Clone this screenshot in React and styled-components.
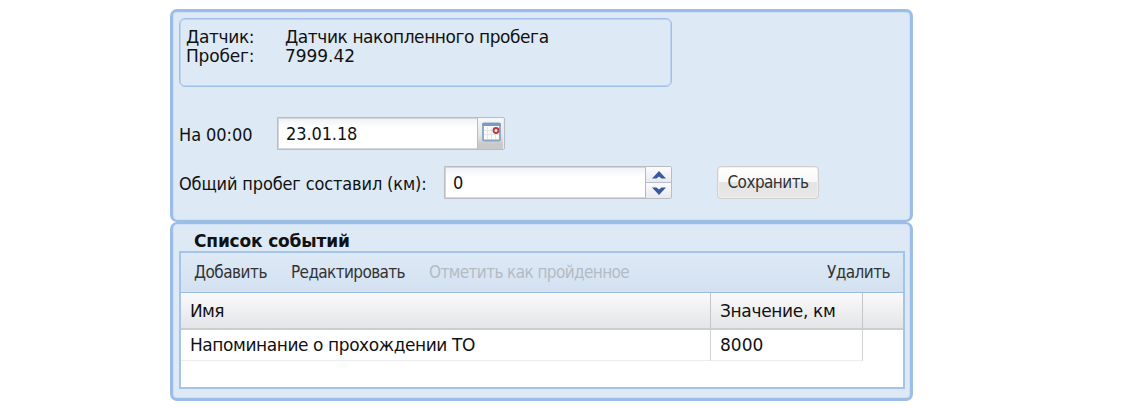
import React, { useState } from "react";
import styled, { createGlobalStyle } from "styled-components";

const GlobalStyle = createGlobalStyle`
  *, *::before, *::after {
    box-sizing: border-box;
  }
  body {
    margin: 0;
    background: #ffffff;
    color: #111111;
    font-family: Verdana, "DejaVu Sans", sans-serif;
  }
`;

const Page = styled.div`
  width: 743px;
  margin-left: 170px;
  padding-top: 9px;
`;

const Panel = styled.section`
  height: ${(props) => props.$height}px;
  padding: ${(props) => props.$padding};
  background: #dde9f5;
  border: 3px solid #9cbee6;
  border-top-width: ${(props) => props.$top || 3}px;
  border-bottom-width: ${(props) => props.$bottom || 3}px;
  border-radius: 7px;
  box-shadow: inset 0 0 0 1px #cfe0f3;
`;

const Text = styled.span`
  display: inline-block;
  white-space: nowrap;
  font-size: ${(props) => props.$size || 17}px;
  font-weight: ${(props) => (props.$bold ? 700 : 400)};
  letter-spacing: ${(props) => props.$spacing || 0}px;
`;

const NarrowText = styled(Text)`
  font-family: Tahoma, "DejaVu Sans Condensed", "DejaVu Sans", sans-serif;
  font-stretch: condensed;
`;

const SensorInfo = styled.div`
  display: grid;
  grid-template-columns: 99px 1fr;
  grid-template-rows: 20px 18px;
  align-content: start;
  align-items: center;
  width: 493px;
  height: 69px;
  padding: 8px 6px;
  border: 1px solid #9fc0ea;
  border-radius: 6px;
  box-shadow: inset 0 0 0 1px #bdd4f0;
`;

const FormRow = styled.div`
  display: flex;
  align-items: center;
  height: 33px;
  margin-top: ${(props) => props.$gap}px;
`;

const Label = styled.label`
  width: ${(props) => props.$width}px;
  padding-top: 1px;
`;

const Field = styled.div`
  display: flex;
  width: 228px;
  height: 33px;
  border: 1px solid #b9bcc2;
  border-radius: 0 2px 2px 0;
`;

const Input = styled.input`
  flex: 1;
  min-width: 0;
  height: 31px;
  padding: 0 0 0 8px;
  border: 0;
  outline: none;
  background: linear-gradient(#eef2f5, #ffffff 10px);
  box-shadow: inset 1px 1px 0 #d3d5d8, inset 0 -1px 0 #d8d8d8;
  color: #111111;
  font-family: Tahoma, "DejaVu Sans Condensed", "DejaVu Sans", sans-serif;
  font-stretch: condensed;
  font-size: 18px;
  letter-spacing: -0.1px;
`;

const DateTrigger = styled.button`
  display: flex;
  justify-content: center;
  width: 27px;
  padding: 4px 0 0;
  border: 0;
  border-left: 1px solid #bcbcbf;
  box-shadow: inset -1px 0 0 #e9ebf0;
  background: linear-gradient(#f7f8fa, #e4e5e7 55%, #c9c9c9 85%);
`;

const Spinner = styled.div`
  display: flex;
  flex-direction: column;
  width: 26px;
  border-left: 1px solid #b8bac3;
`;

const SpinButton = styled.button`
  display: flex;
  flex: 1;
  align-items: center;
  justify-content: center;
  padding: 0;
  border: 0;
  background: linear-gradient(#fbfbfc, #e9eaee);

  & + & {
    border-top: 1px solid #b7bcd2;
  }
`;

const SaveButton = styled.button`
  width: 102px;
  height: 33px;
  margin-left: 45px;
  padding: 0 0 1px;
  border: 1px solid #cfcfcf;
  border-radius: 4px;
  box-shadow: inset 0 0 0 1px #f0efed;
  background: linear-gradient(#ffffff, #f8f8f8 48%, #e3e4e4 50%, #e8e8e7);
  color: #333333;
`;

const ListTitle = styled.h2`
  height: 25px;
  margin: 0;
  padding: 1px 0 0 15px;
  line-height: 25px;
`;

const Grid = styled.div`
  height: 138px;
  border: 2px solid #a5c4ec;
  background: #ffffff;
`;

const Toolbar = styled.div`
  display: flex;
  align-items: center;
  height: 40px;
  padding: 0 13px;
  border-bottom: 1px solid #99bce8;
  background: linear-gradient(#dde9f5, #d3e1f1);
`;

const ToolButton = styled.button`
  width: ${(props) => props.$width}px;
  margin-left: ${(props) => (props.$right ? "auto" : 0)};
  padding: 0 0 1px;
  border: 0;
  background: none;
  text-align: left;
  color: ${(props) => (props.disabled ? "#b3bbc3" : "#333333")};
`;

const GridRow = styled.div`
  display: grid;
  grid-template-columns: 530px 152px;
  height: 31px;
`;

const GridHead = styled(GridRow)`
  height: 37px;
  border-bottom: 2px solid #cccdcf;
  background: linear-gradient(#fafafb, #e4e5e8);
`;

const Cell = styled.div`
  display: flex;
  align-items: center;
  padding-left: 9px;
  border-right: 1px solid #d2d2d2;
  border-bottom: 1px solid #ededed;
`;

const HeadCell = styled(Cell)`
  padding-top: 1px;
  border-right: 1px solid #c4c5c7;
  border-bottom: 0;
`;

function CalendarIcon() {
  return (
    <svg width="19" height="20" viewBox="0 0 19 20">
      <rect x="1" y="1.5" width="17" height="17" rx="1" fill="#fbfbfb" stroke="#86a3c7" strokeWidth="1.8" />
      <path d="M.5 1h18v3H.5z" fill="#7799c2" />
      <path d="M5.5 5v12M9.5 5v12M13.5 5v12M2 8.5h15M2 12.5h15" stroke="#e4e4e4" />
      <circle cx="14" cy="8.5" r="2.5" fill="#f5e4e4" stroke="#b13a45" strokeWidth="1.8" />
    </svg>
  );
}

function SpinArrow({ down }) {
  return (
    <svg width="14" height="8" viewBox="0 0 14 8">
      <path
        d={down ? "M0 .5h4.500L7 2.500l2.500-2h4.500L7 8z" : "M0 7.500h4.500L7 5.500l2.500 2h4.500L7 0z"}
        fill="#37599d"
      />
    </svg>
  );
}

function App() {
  const [date, setDate] = useState("23.01.18");
  const [mileage, setMileage] = useState("0");

  const changeMileage = (step) => {
    setMileage((prev) => String(Math.max(0, Number(prev) + step)));
  };

  return (
    <>
      <GlobalStyle />
      <Page>
        <Panel $height={213} $bottom={2} $padding="6px">
          <SensorInfo>
            <Text $spacing={-0.35}>Датчик:</Text>
            <Text $spacing={-0.42}>Датчик накопленного пробега</Text>
            <Text $spacing={-0.2}>Пробег:</Text>
            <Text $spacing={-0.05}>7999.42</Text>
          </SensorInfo>
          <FormRow $gap={30}>
            <Label $width={98}>
              <NarrowText $size={18} $spacing={-0.05}>На 00:00</NarrowText>
            </Label>
            <Field>
              <Input value={date} onChange={(e) => setDate(e.target.value)} />
              <DateTrigger>
                <CalendarIcon />
              </DateTrigger>
            </Field>
          </FormRow>
          <FormRow $gap={16}>
            <Label $width={265}>
              <NarrowText $size={18} $spacing={-0.14}>Общий пробег составил (км):</NarrowText>
            </Label>
            <Field>
              <Input value={mileage} onChange={(e) => setMileage(e.target.value)} />
              <Spinner>
                <SpinButton onClick={() => changeMileage(1)}>
                  <SpinArrow />
                </SpinButton>
                <SpinButton onClick={() => changeMileage(-1)}>
                  <SpinArrow down />
                </SpinButton>
              </Spinner>
            </Field>
            <SaveButton>
              <NarrowText $spacing={-0.55}>Сохранить</NarrowText>
            </SaveButton>
          </FormRow>
        </Panel>
        <Panel $height={179} $top={2} $padding="2px 5px 0 6px">
          <ListTitle>
            <Text $bold $spacing={-0.17}>Список событий</Text>
          </ListTitle>
          <Grid>
            <Toolbar>
              <ToolButton $width={97}>
                <NarrowText $spacing={-0.5}>Добавить</NarrowText>
              </ToolButton>
              <ToolButton $width={138}>
                <NarrowText $spacing={-0.62}>Редактировать</NarrowText>
              </ToolButton>
              <ToolButton $width={202} disabled>
                <NarrowText $spacing={-0.6}>Отметить как пройденное</NarrowText>
              </ToolButton>
              <ToolButton $width={63} $right>
                <NarrowText $spacing={-0.55}>Удалить</NarrowText>
              </ToolButton>
            </Toolbar>
            <GridHead>
              <HeadCell>
                <Text $spacing={-0.6}>Имя</Text>
              </HeadCell>
              <HeadCell>
                <Text $spacing={-0.33}>Значение, км</Text>
              </HeadCell>
            </GridHead>
            <GridRow>
              <Cell>
                <Text $spacing={-0.42}>Напоминание о прохождении ТО</Text>
              </Cell>
              <Cell>
                <Text>8000</Text>
              </Cell>
            </GridRow>
          </Grid>
        </Panel>
      </Page>
    </>
  );
}

export default App;
